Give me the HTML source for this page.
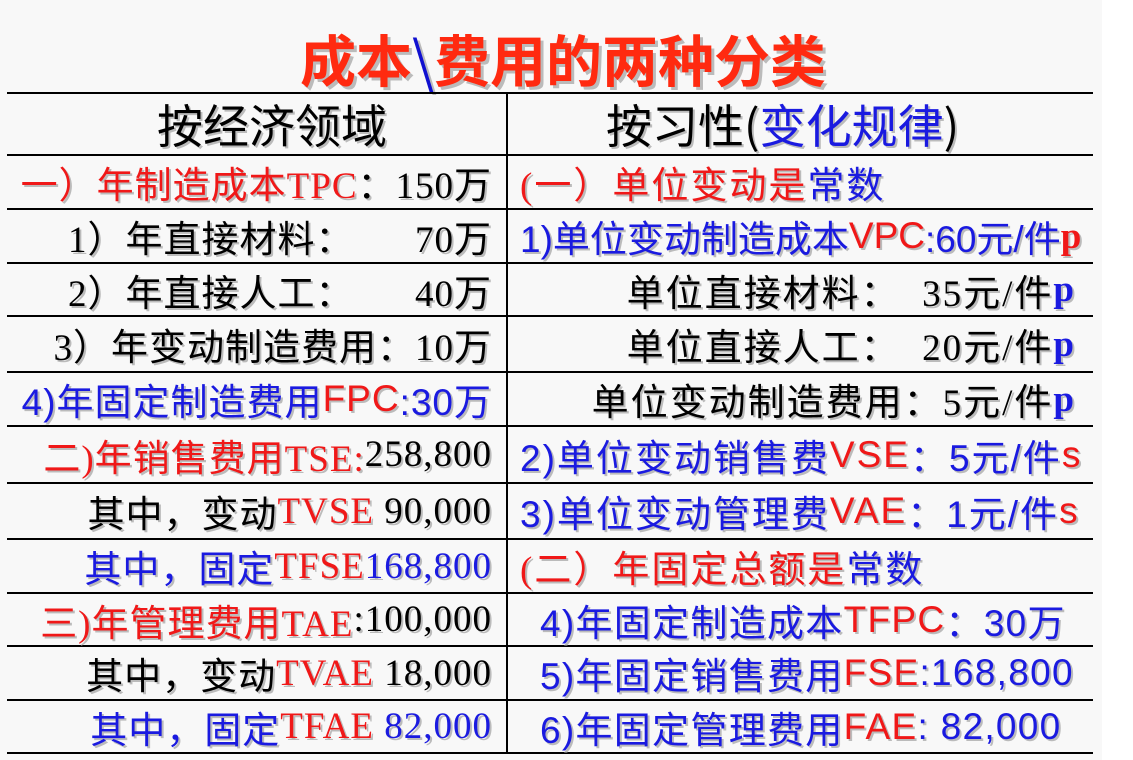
<!DOCTYPE html>
<html><head><meta charset="utf-8"><style>
html,body{margin:0;padding:0;}
body{width:1133px;height:760px;background:#fff;position:relative;overflow:hidden;font-family:"Liberation Serif","Noto Sans CJK SC",serif;}
#bg{position:absolute;left:0;top:0;width:1102px;height:760px;background:#f8f8f8;}
.title{position:absolute;left:300px;top:24px;font-family:"Noto Sans CJK SC",sans-serif;font-weight:bold;font-size:56px;color:#ff2a10;text-shadow:3px 3px 0 #bbb;white-space:nowrap;line-height:70px;}
.h{position:absolute;left:7px;height:2px;width:1086px;background:#000;}
.v{position:absolute;left:506px;top:93px;width:2px;height:661px;background:#000;}
.c{position:absolute;display:flex;align-items:center;white-space:nowrap;font-size:37px;letter-spacing:2px;text-shadow:2px 2px 0 #bbb;color:#000;}
.L{left:7px;width:485px;justify-content:flex-end;letter-spacing:1px;}
.R{left:520px;width:560px;}
.RR{left:520px;width:556px;justify-content:flex-end;}
.R2{left:540px;width:540px;letter-spacing:1.3px;}
.r{color:#f01818}.b{color:#1a1ae0}.k{color:#000}
.hd{font-size:46px;font-family:"Noto Sans CJK SC",sans-serif;letter-spacing:0;}
.s{font-family:"Liberation Sans","Noto Sans CJK SC",sans-serif;}
.pb{font-weight:bold;}
</style></head><body>
<div id="bg"></div>
<div class="title">成本<span style="color:#1010d0;font-weight:normal">\</span>费用的两种分类</div>
<div class="h" style="top:92px"></div>
<div class="h" style="top:154px"></div>
<div class="h" style="top:208px"></div>
<div class="h" style="top:262px"></div>
<div class="h" style="top:315px"></div>
<div class="h" style="top:371px"></div>
<div class="h" style="top:425px"></div>
<div class="h" style="top:482px"></div>
<div class="h" style="top:538px"></div>
<div class="h" style="top:592px"></div>
<div class="h" style="top:645px"></div>
<div class="h" style="top:699px"></div>
<div class="h" style="top:752px"></div>
<div class="v"></div>

<div class="c hd" style="left:157px;top:94px;height:60px;">按经济领域</div>
<div class="c hd" style="left:606px;top:94px;height:60px;">按习性(<span class="b">变化规律</span>)</div>

<!-- left -->
<div class="c L" style="top:156px;height:52px;"><span class="r">一）年制造成本TPC</span>：150万</div>
<div class="c L" style="top:210px;height:52px;">1）年直接材料：&nbsp;&nbsp;&nbsp;&nbsp;&nbsp;&nbsp;70万</div>
<div class="c L" style="top:264px;height:51px;">2）年直接人工：&nbsp;&nbsp;&nbsp;&nbsp;&nbsp;&nbsp;40万</div>
<div class="c L" style="top:317px;height:54px;">3）年变动制造费用：10万</div>
<div class="c L b s" style="top:373px;height:52px;">4)年固定制造费用<span class="r">FPC</span>:30万</div>
<div class="c L" style="top:427px;height:55px;"><span class="r">二)年销售费用TSE:</span>258,800</div>
<div class="c L" style="top:484px;height:54px;">其中，变动<span class="r">TVSE</span>&nbsp;90,000</div>
<div class="c L b" style="top:540px;height:52px;">其中，固定<span class="r">TFSE</span>168,800</div>
<div class="c L" style="top:594px;height:51px;"><span class="r">三)年管理费用TAE</span>:100,000</div>
<div class="c L" style="top:647px;height:52px;">其中，变动<span class="r">TVAE</span>&nbsp;18,000</div>
<div class="c L b" style="top:701px;height:51px;">其中，固定<span class="r">TFAE</span>&nbsp;82,000</div>

<!-- right -->
<div class="c R" style="top:156px;height:52px;"><span class="r">(一）单位变动是</span><span class="b">常数</span></div>
<div class="c R b s" style="top:210px;height:52px;letter-spacing:0;">1)单位变动制造成本<span class="r">VPC</span>:60元/件<span class="r pb" style="font-family:'Liberation Serif',serif">p</span></div>
<div class="c RR" style="top:264px;height:51px;">单位直接材料：&nbsp;&nbsp;35元/件<span class="b pb">p</span></div>
<div class="c RR" style="top:317px;height:54px;">单位直接人工：&nbsp;&nbsp;20元/件<span class="b pb">p</span></div>
<div class="c RR" style="top:373px;height:52px;">单位变动制造费用：5元/件<span class="b pb">p</span></div>
<div class="c R b s" style="top:427px;height:55px;">2)单位变动销售费<span class="r">VSE</span>：5元/件<span class="r">s</span></div>
<div class="c R b s" style="top:484px;height:54px;">3)单位变动管理费<span class="r">VAE</span>：1元/件<span class="r">s</span></div>
<div class="c R" style="top:540px;height:52px;"><span class="r">(二）年固定总额是</span><span class="b">常数</span></div>
<div class="c R2 b s" style="top:594px;height:51px;">4)年固定制造成本<span class="r">TFPC</span>：30万</div>
<div class="c R2 b s" style="top:647px;height:52px;">5)年固定销售费用<span class="r">FSE</span>:168,800</div>
<div class="c R2 b s" style="top:701px;height:51px;">6)年固定管理费用<span class="r">FAE</span>:&nbsp;82,000</div>
</body></html>
